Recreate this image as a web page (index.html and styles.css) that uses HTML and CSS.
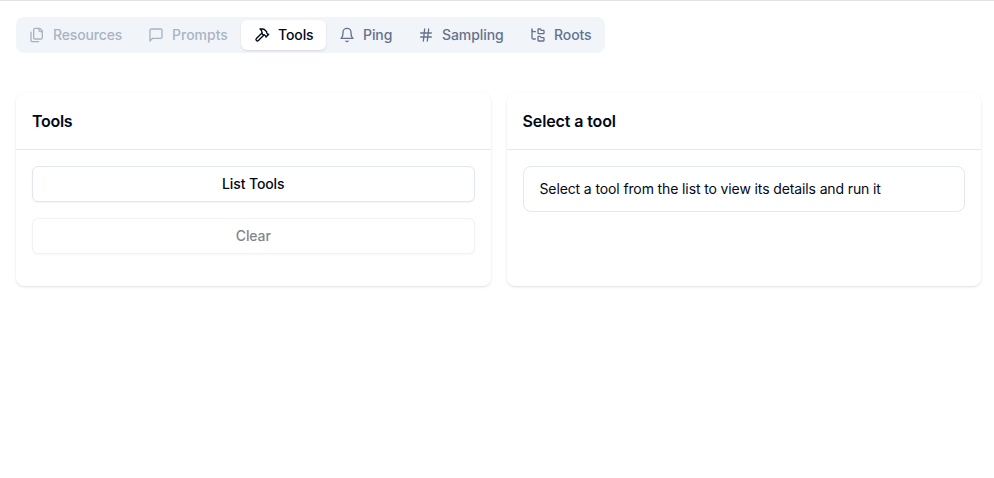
FILE: index.html
```html
<!DOCTYPE html>
<html lang="en">
<head>
<meta charset="utf-8">
<title>Inspector</title>
<link rel="stylesheet" href="styles.css">
</head>
<body>
<main class="page">
  <nav class="tabs">
    <button class="tab tab-resources disabled"><svg class="icon" viewBox="0 0 24 24"><path d="M20 7h-3a2 2 0 0 1-2-2V2"/><path d="M9 18a2 2 0 0 1-2-2V4a2 2 0 0 1 2-2h7l4 4v10a2 2 0 0 1-2 2Z"/><path d="M3 7.600v12.800A1.600 1.600 0 0 0 4.600 22h9.800"/></svg>Resources</button>
    <button class="tab tab-prompts disabled"><svg class="icon" viewBox="0 0 24 24"><path d="M21 15a2 2 0 0 1-2 2H7l-4 4V5a2 2 0 0 1 2-2h14a2 2 0 0 1 2 2z"/></svg>Prompts</button>
    <button class="tab tab-tools active"><svg class="icon" viewBox="0 0 24 24"><path d="m15 12-8.373 8.373a1 1 0 1 1-3-3L12 9"/><path d="m18 15 4-4"/><path d="m21.500 11.500-1.914-1.914A2 2 0 0 1 19 8.172V7l-2.260-2.260a6 6 0 0 0-4.202-1.756L9 2.960l.920.820A6.180 6.180 0 0 1 12 8.400V10l2 2h1.172a2 2 0 0 1 1.414.586L18.500 14.500"/></svg>Tools</button>
    <button class="tab tab-ping"><svg class="icon" viewBox="0 0 24 24"><path d="M6 8a6 6 0 0 1 12 0c0 7 3 9 3 9H3s3-2 3-9"/><path d="M10.300 21a1.940 1.940 0 0 0 3.400 0"/></svg>Ping</button>
    <button class="tab tab-sampling"><svg class="icon" viewBox="0 0 24 24"><path d="M4 9h16M4 15h16M10 3 8 21M16 3l-2 18"/></svg>Sampling</button>
    <button class="tab tab-roots"><svg class="icon" viewBox="0 0 24 24"><path d="M20 10a1 1 0 0 0 1-1V6a1 1 0 0 0-1-1h-2.500a1 1 0 0 1-.800-.400l-.900-1.200A1 1 0 0 0 15 3h-2a1 1 0 0 0-1 1v5a1 1 0 0 0 1 1Z"/><path d="M20 21a1 1 0 0 0 1-1v-3a1 1 0 0 0-1-1h-2.900a1 1 0 0 1-.880-.550l-.420-.850a1 1 0 0 0-.920-.600H13a1 1 0 0 0-1 1v5a1 1 0 0 0 1 1Z"/><path d="M3 5a2 2 0 0 0 2 2h3"/><path d="M3 3v13a2 2 0 0 0 2 2h3"/></svg>Roots</button>
  </nav>
  <div class="panels">
    <section class="card">
      <h3 class="card-title title-short">Tools</h3>
      <div class="card-body">
        <button class="btn">List Tools</button>
        <button class="btn muted">Clear</button>
      </div>
    </section>
    <section class="card">
      <h3 class="card-title">Select a tool</h3>
      <div class="card-body">
        <div class="alert">Select a tool from the list to view its details and run it</div>
      </div>
    </section>
  </div>
</main>
</body>
</html>
```
FILE: styles.css
```css
* { box-sizing: border-box; }
body {
  margin: 0;
  background: #fff;
  color: #020817;
  font-family: Inter, "Liberation Sans", sans-serif;
  font-size: 14px;
  line-height: 20px;
}
button { font: inherit; color: inherit; margin: 0; }
.page {
  min-height: 100vh;
  border-top: 1px solid #e2e2e4;
  padding: 16px 13px 0 16px;
}
.tabs {
  display: inline-flex;
  align-items: center;
  height: 36px;
  border-radius: 8px;
  background: #f1f5fa;
  color: #65728c;
  vertical-align: top;
}
.tab {
  display: flex;
  align-items: center;
  height: 30px;
  padding: 0 0 0 13px;
  border: 0;
  border-radius: 6px;
  background: none;
  font-weight: 500;
  white-space: nowrap;
}
.tab-resources { width: 119px; letter-spacing: -.15px; }
.tab-prompts { width: 106px; }
.tab-tools { width: 85px; letter-spacing: -.1px; }
.tab-ping { width: 79px; letter-spacing: -.1px; }
.tab-sampling { width: 112px; letter-spacing: -.07px; }
.tab-roots { width: 88px; letter-spacing: -.1px; }
.tab.disabled { opacity: .5; }
.tab.active {
  background: #fff;
  color: #020817;
  box-shadow: 0 1px 2px rgba(0, 0, 0, .12);
}
.icon {
  flex: none;
  width: 16px;
  height: 16px;
  margin-right: 8px;
  fill: none;
  stroke: currentColor;
  stroke-width: 2;
  stroke-linecap: round;
  stroke-linejoin: round;
}
.panels {
  display: grid;
  grid-template-columns: 1fr 1fr;
  gap: 16px;
  margin-top: 40px;
}
.card {
  height: 193px;
  border-radius: 8px;
  box-shadow: 0 1px 3px rgba(0, 0, 0, .1), 0 1px 2px -1px rgba(0, 0, 0, .1);
}
.card-title {
  margin: 0;
  padding: 16px;
  height: 57px;
  border-bottom: 1px solid #e5e7eb;
  font-size: 16px;
  line-height: 24px;
  font-weight: 600;
  letter-spacing: -.12px;
}
.title-short { letter-spacing: -.3px; }
.card-body {
  display: flex;
  flex-direction: column;
  gap: 16px;
  padding: 16px;
}
.btn {
  height: 36px;
  border: 1px solid #e2e6f0;
  border-radius: 6px;
  background: #fff;
  box-shadow: 0 1px 2px rgba(0, 0, 0, .05);
  font-weight: 500;
  letter-spacing: -.1px;
}
.btn.muted { opacity: .5; }
.alert {
  padding: 12px 16px;
  height: 46px;
  border: 1px solid #e2e8f0;
  border-radius: 8px;
  letter-spacing: -.12px;
}
```
